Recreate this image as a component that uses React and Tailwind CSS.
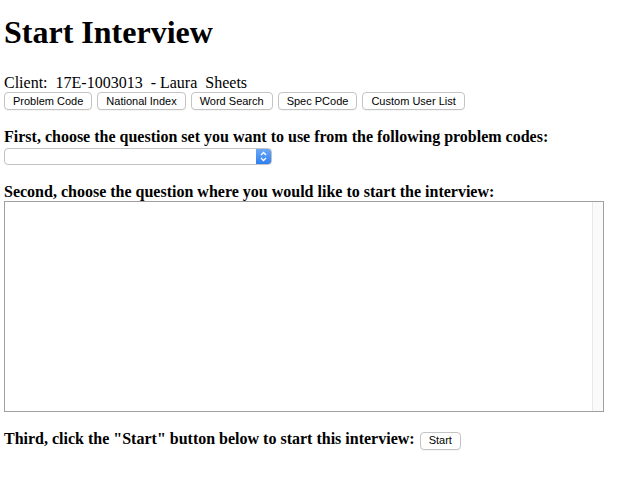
import React from 'react';

const serif = { fontFamily: '"Liberation Serif", "Times New Roman", serif' };

const Btn = ({ children }) => (
  <button
    type="button"
    className="h-[18px] px-[8px] bg-white border border-[#c4c4c4] rounded-[4px] text-[11px] leading-none text-black shadow-[0_1px_0_rgba(0,0,0,0.04)]"
    style={{ fontFamily: '"Liberation Sans", Arial, sans-serif' }}
  >
    {children}
  </button>
);

const App = () => {
  return (
    <div className="bg-white text-black min-h-[477px] px-[4px] pt-[14px]" style={serif}>
      <h1 className="text-[32px] font-bold leading-[37px] mb-[22px]">Start Interview</h1>

      <div className="text-[16px] leading-[19px] whitespace-pre">Client:  17E-1003013  - Laura  Sheets</div>
      <div className="flex gap-[5px]">
        <Btn>Problem Code</Btn>
        <Btn>National Index</Btn>
        <Btn>Word Search</Btn>
        <Btn>Spec PCode</Btn>
        <Btn>Custom User List</Btn>
      </div>

      {/* step 1 */}
      <p className="text-[16px] font-bold leading-[18px] mt-[18px]">
        First, choose the question set you want to use from the following problem codes:
      </p>
      <div className="mt-[2px] w-[268px] h-[17px] flex border border-[#c2c2c2] rounded-[4px] overflow-hidden bg-white">
        <div className="flex-1" />
        <div className="w-[15px] bg-gradient-to-b from-[#6aa8f7] to-[#2f7ef0] flex items-center justify-center">
          <svg width="7" height="11" viewBox="0 0 7 11" fill="none" stroke="white" strokeWidth="1.3">
            <path d="M1 4 L3.5 1.5 L6 4" />
            <path d="M1 7 L3.5 9.5 L6 7" />
          </svg>
        </div>
      </div>

      {/* step 2 */}
      <p className="text-[16px] font-bold leading-[18px] mt-[18px]">
        Second, choose the question where you would like to start the interview:
      </p>
      <div className="mt-0 w-[600px] h-[211px] border border-[#a0a0a0] flex bg-white">
        <div className="flex-1" />
        <div className="w-[11px] bg-[#fafafa] border-l border-[#e8e8e8]" />
      </div>

      {/* step 3 */}
      <div className="flex items-center mt-[15px]">
        <span className="text-[16px] font-bold leading-[18px]">
          Third, click the "Start" button below to start this interview:
        </span>
        <span className="ml-[5px]">
          <Btn>Start</Btn>
        </span>
      </div>
    </div>
  );
};

export default App;
